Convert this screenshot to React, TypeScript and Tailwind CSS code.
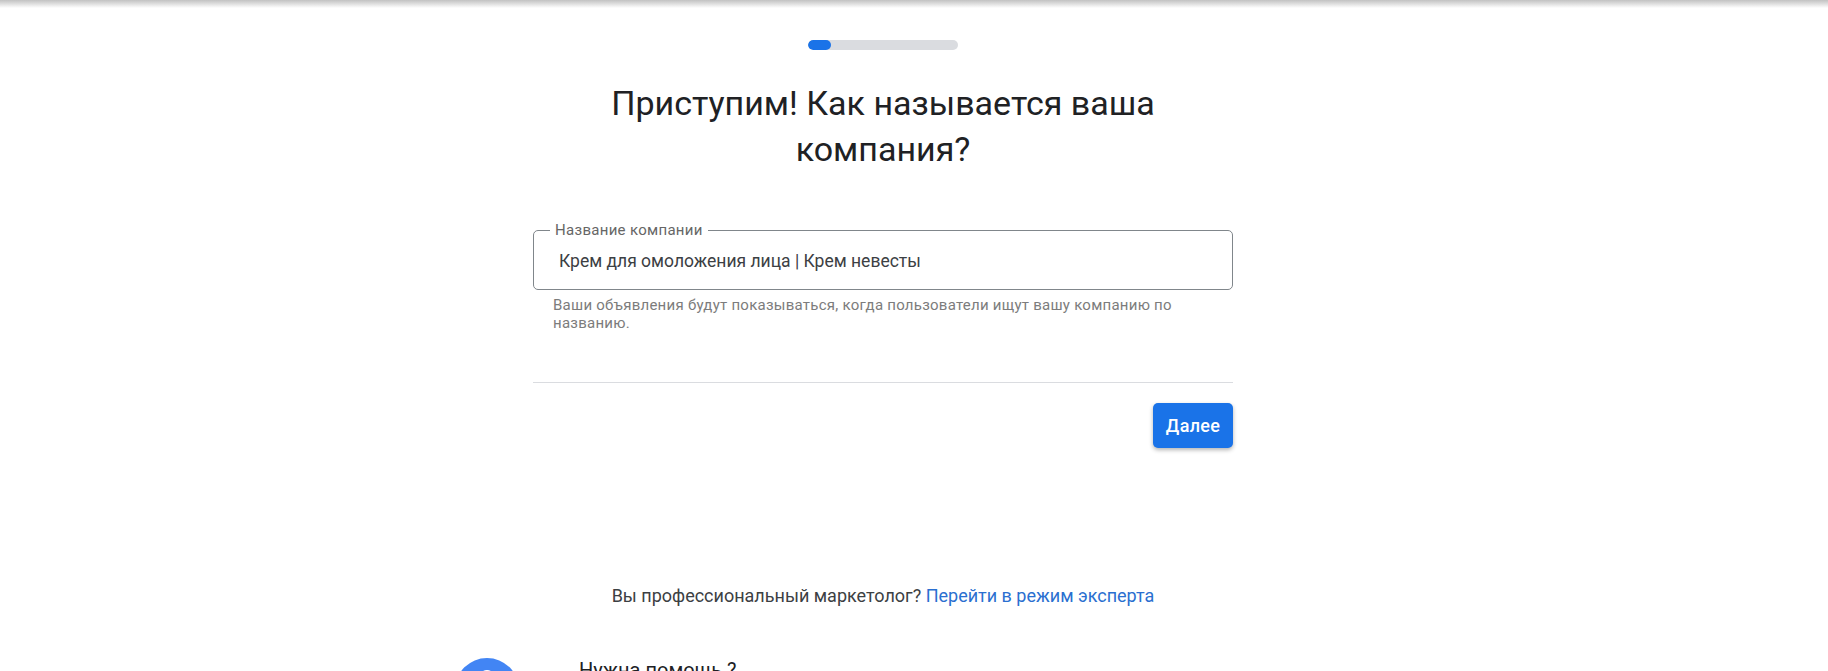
export default function App() {
  return (
    <div className="h-[671px] overflow-hidden bg-white font-['Roboto',sans-serif] relative">
      <div className="h-2 bg-linear-to-b from-[#c2c2c2] to-white" />

      <div className="ml-[533px] w-[700px]">
        <div className="mt-8 mx-auto w-[150px] h-2.5 rounded-full bg-[#dadce0] overflow-hidden">
          <div className="h-full w-[23px] rounded-full bg-[#1a73e8]" />
        </div>

        <h1 className="mt-[30px] mx-auto w-[560px] text-center text-[34px] leading-[46px] font-normal text-[#202124]">
          Приступим! Как называется ваша компания?
        </h1>

        <fieldset className="mt-[50px] h-[68px] border border-[#80868b] rounded-[5px] pl-4">
          <legend className="px-[5px] text-[15px] leading-4 tracking-[0.3px] text-[#666]">
            Название компании
          </legend>
          <div className="pl-[9px] pt-[11px] text-[17.5px] leading-6 text-[#3c4043]">
            Крем для омоложения лица | Крем невесты
          </div>
        </fieldset>

        <p className="mt-[6px] pl-5 pr-10 text-[15px] leading-[18px] tracking-[0.25px] text-[#7c7c7c]">
          Ваши объявления будут показываться, когда пользователи ищут вашу компанию по названию.
        </p>

        <div className="mt-[50px] border-t border-[#dadce0]" />

        <div className="mt-5 flex justify-end">
          <button className="w-20 h-[45px] rounded-[5px] bg-[#1a73e8] text-white text-[18px] font-medium tracking-[0.3px] shadow-[0_2px_4px_rgba(0,0,0,0.3)]">
            Далее
          </button>
        </div>

        <p className="mt-[136px] text-center text-[18px] leading-6 text-[#3c4043]">
          Вы профессиональный маркетолог?{' '}
          <a className="text-[#2a6fd0]">Перейти в режим эксперта</a>
        </p>
      </div>

      <div className="ml-[455px] mt-[50px] flex gap-[60px]">
        <svg width="64" height="64" viewBox="0 0 64 64" className="shrink-0">
          <circle cx="32" cy="32" r="32" fill="#4285f4" />
          <circle cx="32" cy="20" r="8" fill="#fff" />
        </svg>
        <div className="text-[20px] leading-6 text-[#202124]">Нужна помощь ?</div>
      </div>
    </div>
  );
}
